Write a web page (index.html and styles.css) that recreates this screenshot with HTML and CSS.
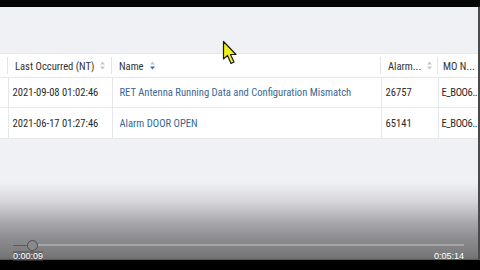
FILE: index.html
```html
<!DOCTYPE html>
<html>
<head>
<meta charset="utf-8">
<link rel="stylesheet" href="styles.css">
</head>
<body>
<div class="screen">
  <div class="topbar"></div>
  <div class="app">
    <div class="toolbar"></div>
    <table class="grid">
      <colgroup>
        <col class="c0"><col class="c1"><col class="c2"><col class="c3"><col class="c4">
      </colgroup>
      <thead>
        <tr>
          <th class="first"><span class="sep"></span></th>
          <th><span class="hd">Last Occurred (NT)</span><svg class="sort" width="5" height="9" viewBox="0 0 5 9"><path d="M2.5 0.5L5 3.5H0z" fill="#c4c7cc"/><path d="M2.5 8.5L5 5.5H0z" fill="#c4c7cc"/></svg><span class="sep"></span></th>
          <th><span class="hd">Name</span><svg class="sort" width="5" height="9" viewBox="0 0 5 9"><path d="M2.5 0.5L5 3.5H0z" fill="#c4c7cc"/><path d="M2.5 8.5L5 5.5H0z" fill="#2f6fb3"/></svg><span class="sep"></span></th>
          <th><span class="hd">Alarm...</span><svg class="sort" width="5" height="9" viewBox="0 0 5 9"><path d="M2.5 0.5L5 3.5H0z" fill="#c4c7cc"/><path d="M2.5 8.5L5 5.5H0z" fill="#c4c7cc"/></svg><span class="sep"></span></th>
          <th><span class="hd">MO N...</span></th>
        </tr>
      </thead>
      <tbody>
        <tr>
          <td class="first"></td>
          <td>2021-09-08 01:02:46</td>
          <td class="link">RET Antenna Running Data and Configuration Mismatch</td>
          <td>26757</td>
          <td class="mo">E_BOO6..</td>
        </tr>
        <tr>
          <td class="first"></td>
          <td>2021-06-17 01:27:46</td>
          <td class="link">Alarm DOOR OPEN</td>
          <td>65141</td>
          <td class="mo">E_BOO6..</td>
        </tr>
      </tbody>
    </table>
  </div>
  <div class="player">
    <div class="track">
      <div class="played"></div>
      <div class="knob"></div>
      <div class="rest"></div>
    </div>
    <div class="times"><span class="cur">0:00:09</span><span>0:05:14</span></div>
  </div>
  <div class="bottombar"></div>
  <svg class="cursor" width="16" height="26" viewBox="0 0 16 26"><path d="M1.5 1.5L1.5 19L5.5 15.5L9 23.5L12 22L8.5 14.5L14 14.5Z" fill="#f2ee1a" stroke="#1a1a1a" stroke-width="1.2" stroke-linejoin="round"/></svg>
</div>
</body>
</html>
```
FILE: styles.css
```css
html, body { margin: 0; padding: 0; }
body { width: 480px; height: 270px; overflow: hidden; background: #000; font-family: "Liberation Sans Narrow", "Roboto Condensed", Roboto, sans-serif; }
.screen { position: relative; width: 480px; height: 270px; display: flex; flex-direction: column; }
.topbar { height: 7px; background: #050505; flex: none; }
.app { flex: 1; background: linear-gradient(to bottom, #f0f1f5 0px, #f0f1f5 175px, #d6d6da 195px, #a9a9ad 215px, #8c8c8f 232px, #7d7d80 245px, #6f6f72 253px); border-right: 2px solid #4a4a4a; }
.toolbar { height: 46px; }
.grid { border-collapse: collapse; table-layout: fixed; width: 478px; background: #fff; font-size: 10.6px; color: #2b2b2b; }
.c0 { width: 8px; } .c1 { width: 104px; } .c2 { width: 269px; } .c3 { width: 57px; } .c4 { width: 40px; }
th { height: 23px; padding: 0 0 0 7px; text-align: left; font-weight: normal; position: relative; white-space: nowrap; overflow: hidden; border-top: 1px solid #e6e7eb; border-bottom: 1px solid #e6e7eb; color: #333; }
th.first { padding: 0; }
th:last-child { padding-left: 5px; }
.hd { vertical-align: middle; }
.sort { vertical-align: middle; margin-left: 6px; }
.sep { position: absolute; right: 0; top: 3px; bottom: 3px; width: 1px; background: #e3e4e8; }
td { height: 29px; padding: 0 0 0 4px; white-space: nowrap; overflow: hidden; border-bottom: 1px solid #e6e7eb; border-left: 1px solid #e6e7eb; }
td.first { border-left: none; padding: 0; }
td.mo { padding-left: 3px; letter-spacing: -0.4px; }
tbody tr:last-child td { height: 30px; }
.link { color: #3a6896; padding-left: 7px; }
.player { position: absolute; left: 0; top: 232px; width: 478px; height: 28px; }
.track { position: absolute; left: 13px; top: 12px; width: 451px; height: 2px; display: flex; align-items: center; }
.played { width: 14px; height: 1px; background: #5c5c5e; }
.knob { width: 9px; height: 9px; border-radius: 50%; border: 1px solid #505054; background: #8a8a8d; flex: none; }
.rest { flex: 1; height: 2px; background: #a6a6a8; }
.times { position: absolute; left: 13px; right: 14px; top: 19px; display: flex; justify-content: space-between; font-size: 9px; color: #fff; font-family: "Liberation Sans", sans-serif; }
.cur { background: rgba(80,80,82,0.5); }
.bottombar { height: 10px; background: #000; border-top: 1px solid #58585a; flex: none; }
.cursor { position: absolute; left: 222px; top: 40px; }
```
